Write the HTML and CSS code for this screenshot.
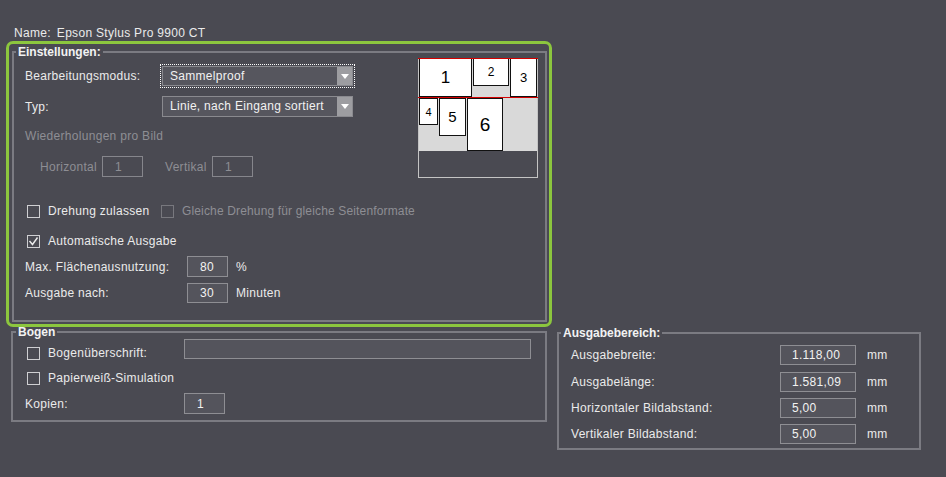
FILE: index.html
```html
<!DOCTYPE html>
<html>
<head>
<meta charset="utf-8">
<title>Epson Stylus Pro 9900 CT</title>
<link rel="stylesheet" href="styles.css">
</head>
<body>
<div class="page">
    <div class="name_line">Name:<span class="name_value">Epson Stylus Pro 9900 CT</span></div>
    <div class="layout">
        <div class="focus_box">
            <fieldset class="group group_settings">
                <legend>Einstellungen:</legend>
                <div class="settings_body">
                    <div class="settings_form">
                        <div class="row">
                            <div class="label label_select">Bearbeitungsmodus:</div>
                            <div class="select select_focus"><span class="select_text">Sammelproof</span><span class="select_arrow"></span></div>
                        </div>
                        <div class="row row_tall row_typ">
                            <div class="label label_select">Typ:</div>
                            <div class="select"><span class="select_text">Linie, nach Eingang sortiert</span><span class="select_arrow"></span></div>
                        </div>
                        <div class="row row_repeat disabled">Wiederholungen pro Bild</div>
                        <div class="row row_tall row_axes disabled">
                            <div class="label label_horizontal">Horizontal</div>
                            <input class="field field_small field_disabled" type="text" value="1" disabled>
                            <div class="label label_vertical">Vertikal</div>
                            <input class="field field_small field_disabled" type="text" value="1" disabled>
                        </div>
                        <div class="row row_rotate">
                            <div class="check_item check_item_first"><span class="check"></span>Drehung zulassen</div>
                            <div class="check_item check_item_same disabled"><span class="check check_disabled"></span>Gleiche Drehung für gleiche Seitenformate</div>
                        </div>
                        <div class="row row_auto">
                            <div class="check_item"><span class="check"><svg width="13" height="13" viewBox="0 0 13 13"><polyline points="2.5,6 5.5,9.5 10.5,2.5" fill="none" stroke="#ececec" stroke-width="1.4"/></svg></span>Automatische Ausgabe</div>
                        </div>
                        <div class="row row_tall row_usage">
                            <div class="label label_field">Max. Flächenausnutzung:</div>
                            <input class="field field_small" type="text" value="80">
                            <div class="unit">%</div>
                        </div>
                        <div class="row row_after">
                            <div class="label label_field">Ausgabe nach:</div>
                            <input class="field field_small" type="text" value="30">
                            <div class="unit">Minuten</div>
                        </div>
                    </div>
                    <div class="preview">
                        <div class="sheet_area"></div>
                        <div class="sheet sheet_1">1</div>
                        <div class="sheet sheet_2">2</div>
                        <div class="sheet sheet_3">3</div>
                        <div class="sheet sheet_4">4</div>
                        <div class="sheet sheet_5">5</div>
                        <div class="sheet sheet_6">6</div>
                        <div class="line_mark line_mark_top"></div>
                        <div class="line_mark line_mark_second"></div>
                    </div>
                </div>
            </fieldset>
        </div>

        <fieldset class="group group_sheet">
            <legend>Bogen</legend>
            <div class="row row_heading">
                <div class="label label_sheet"><div class="check_item check_item_low"><span class="check"></span>Bogenüberschrift:</div></div>
                <input class="field field_heading" type="text" value="">
            </div>
            <div class="row row_paper">
                <div class="check_item"><span class="check"></span>Papierweiß-Simulation</div>
            </div>
            <div class="row row_tall row_copies">
                <div class="label label_sheet">Kopien:</div>
                <input class="field field_small" type="text" value="1">
            </div>
        </fieldset>

        <fieldset class="group group_output">
            <legend>Ausgabebereich:</legend>
            <div class="row">
                <div class="label label_output">Ausgabebreite:</div>
                <input class="field field_output" type="text" value="1.118,00">
                <div class="unit unit_mm">mm</div>
            </div>
            <div class="row row_output">
                <div class="label label_output">Ausgabelänge:</div>
                <input class="field field_output" type="text" value="1.581,09">
                <div class="unit unit_mm">mm</div>
            </div>
            <div class="row row_output">
                <div class="label label_output">Horizontaler Bildabstand:</div>
                <input class="field field_output" type="text" value="5,00">
                <div class="unit unit_mm">mm</div>
            </div>
            <div class="row row_output">
                <div class="label label_output">Vertikaler Bildabstand:</div>
                <input class="field field_output" type="text" value="5,00">
                <div class="unit unit_mm">mm</div>
            </div>
        </fieldset>
    </div>
</div>
</body>
</html>
```

FILE: styles.css
```css
body {
    margin: 0;
    background-color: #4a4a52;
    font-family: "Liberation Sans", Arial, sans-serif;
    font-size: 12px;
    line-height: 14px;
    color: #ebebeb;
    letter-spacing: 0.3px;
}
.page {
    padding: 26px 0 0 6px;
}
.name_line {
    height: 14px;
    padding-left: 8px;
    margin-bottom: 1px;
    white-space: nowrap;
}
.name_value {
    margin-left: 6px;
}
.layout {
    display: grid;
    grid-template-columns: 546px 364px;
    column-gap: 5px;
}

/* green frame round the active group */
.focus_box {
    grid-column: 1;
    grid-row: 1;
    border: 3px solid #8cc63e;
    border-radius: 7px;
    padding: 1px 2px 2px 3px;
}

.group {
    margin: 0;
    padding: 0;
    min-width: 0;
    border: 2px solid #7b7b82;
}
.group legend {
    padding: 0 2px;
    margin-left: -9px;
    font-weight: bold;
    line-height: 14px;
    letter-spacing: 0;
    color: #f2f2f2;
}
.group_settings {
    padding: 0 7px 17px 11px;
}
.group_sheet {
    grid-column: 1;
    grid-row: 2;
    align-self: start;
    margin: -2px 5px 0;
    padding: 0 14px 6px 12px;
}
.group_output {
    grid-column: 2;
    grid-row: 2;
    align-self: start;
    margin-top: -1px;
    padding: 5px 12px 4px 12px;
}
.group_output legend {
    margin-left: -10px;
}

.settings_body {
    display: flex;
    align-items: flex-start;
}
.settings_form {
    width: 388px;
    padding-top: 7px;
    white-space: nowrap;
}

.row {
    display: flex;
    align-items: center;
    height: 20px;
    white-space: nowrap;
}
.row > * { flex: none; }
.row_tall { height: 21px; }
.row_typ { margin-top: 10px; }
.row_repeat { margin-top: 9px; }
.row_axes { margin-top: 10px; padding-left: 15px; }
.row_rotate { margin-top: 24px; }
.row_auto { margin-top: 10px; }
.row_usage { margin-top: 5px; }
.row_after { margin-top: 6px; }
.row_paper { margin-top: 9px; }
.row_copies { margin-top: 5px; }
.row_output { margin-top: 6px; }
.group_output .row:nth-child(3) { margin-top: 7px; }

.disabled {
    color: #8e8e94;
}

.label_select { width: 137px; }
.label_horizontal { width: 62px; }
.label_vertical { width: 47px; margin-left: 22px; }
.label_field { width: 162px; }
.label_sheet { width: 159px; }
.label_output { width: 209px; }

.unit { margin-left: 8px; }
.unit_mm { margin-left: 11px; }

/* combo boxes */
.select {
    display: flex;
    box-sizing: border-box;
    width: 191px;
    height: 100%;
    border: 1px solid #8a8a8f;
    background-color: #56565e;
}
.select_focus {
    outline: 1px dotted #ffffff;
    outline-offset: 1px;
}
.select_text {
    flex: 1;
    padding-left: 7px;
    line-height: 18px;
    color: #f2f2f2;
}
.select_arrow {
    display: flex;
    align-items: center;
    justify-content: center;
    width: 15px;
    background-color: #9d9da1;
}
.select_arrow::after {
    content: "";
    border-left: 4px solid transparent;
    border-right: 4px solid transparent;
    border-top: 5px solid #ffffff;
}

/* text fields */
.field {
    box-sizing: border-box;
    height: 100%;
    margin: 0;
    padding: 0 0 0 12px;
    border: 1px solid #8e8e93;
    background-color: #54545c;
    color: #f2f2f2;
    font: inherit;
    letter-spacing: inherit;
    outline: none;
}
.field_small { width: 41px; }
.field_disabled {
    background-color: transparent;
    border-color: #86868c;
    color: #8e8e94;
}
.field_heading { width: 347px; }
.field_output { width: 76px; padding-left: 11px; }

/* check boxes */
.check_item {
    display: flex;
    align-items: center;
}
.check_item_first { width: 136px; }
.check_item_same { letter-spacing: 0.15px; }
.check_item_low { margin-top: 8px; }
.check {
    box-sizing: border-box;
    width: 13px;
    height: 13px;
    margin: 0 8px 0 2px;
    border: 1px solid #cfcfd2;
    flex: none;
}
.check svg {
    display: block;
    margin: -1px;
}
.check_disabled {
    margin-left: 0;
    border-color: #78787e;
}

/* layout preview of the sheets */
.preview {
    position: relative;
    box-sizing: border-box;
    width: 120px;
    height: 120px;
    margin: -1px 0 0 5px;
    border: 1px solid #c4c4c4;
    flex: none;
}
.sheet_area {
    position: absolute;
    left: 0;
    top: 0;
    width: 118px;
    height: 92px;
    background-color: #d9d9d9;
}
.sheet {
    position: absolute;
    box-sizing: border-box;
    display: flex;
    align-items: center;
    justify-content: center;
    border: 1px solid #111111;
    background-color: #ffffff;
    color: #000000;
    letter-spacing: 0;
}
.sheet_1 { left: 0; top: -1px; width: 53px; height: 39px; font-size: 17px; }
.sheet_2 { left: 54px; top: -1px; width: 36px; height: 28px; font-size: 12px; }
.sheet_3 { left: 91px; top: -1px; width: 27px; height: 39px; font-size: 13px; }
.sheet_4 { left: 0; top: 39px; width: 19px; height: 27px; font-size: 11px; }
.sheet_5 { left: 20px; top: 39px; width: 27px; height: 38px; font-size: 15px; }
.sheet_6 { left: 48px; top: 39px; width: 36px; height: 53px; font-size: 19px; }
.line_mark {
    position: absolute;
    left: -1px;
    width: 120px;
    height: 1px;
    background-color: #d40000;
}
.line_mark_top { top: -1px; }
.line_mark_second { top: 38px; }
```
